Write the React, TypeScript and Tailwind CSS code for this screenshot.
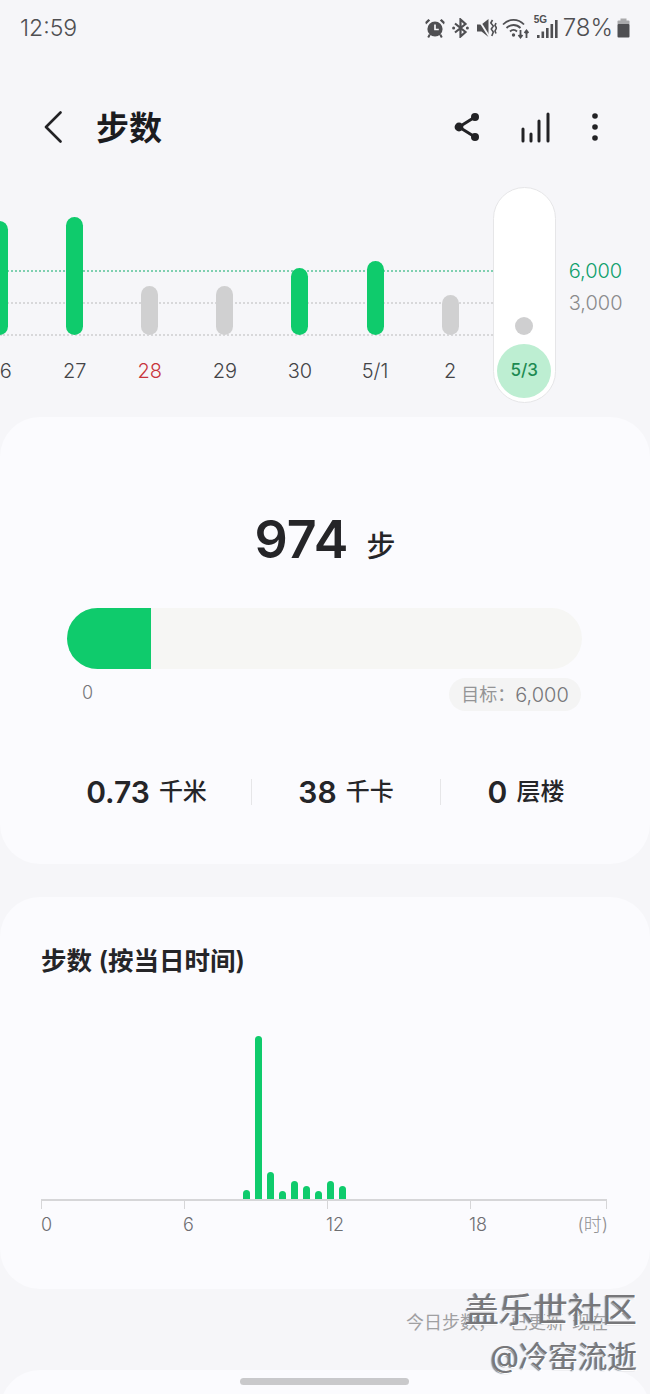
import React from 'react';

const days = [
  { label: '26', height: 114, green: true },
  { label: '27', height: 118, green: true },
  { label: '28', height: 49, green: false, red: true },
  { label: '29', height: 49, green: false },
  { label: '30', height: 67, green: true },
  { label: '5/1', height: 74, green: true },
  { label: '2', height: 40, green: false },
];

const hourly = [9, 163, 27, 8, 18, 13, 8, 18, 13];

const StatusIcons = () => (
  <div className="flex items-center text-[#4f4f52]">
    {/* alarm */}
    <svg width="20" height="20" viewBox="0 0 20 20" fill="currentColor">
      <circle cx="10" cy="11" r="7.6" />
      <path d="M1 6.5 5.2 2.4 3.4 1 0.3 4ZM19 6.5 14.8 2.4 16.6 1 19.7 4Z" />
      <path d="M10 6.5V11.5H13.8" stroke="#f6f6f9" strokeWidth="1.7" fill="none" />
      <path d="M4.8 16.5 3.2 19.4M15.2 16.5 16.8 19.4" stroke="currentColor" strokeWidth="2" />
    </svg>
    {/* bluetooth */}
    <svg width="17" height="20" viewBox="0 0 17 20" fill="none" stroke="currentColor" strokeWidth="2.2" className="ml-[7px]">
      <path d="M3 5.5 13.5 14 8.5 18.5V1.5L13.5 6 3 14.5" />
      <circle cx="1.6" cy="10" r="1.5" fill="currentColor" stroke="none" />
      <circle cx="15.4" cy="10" r="1.5" fill="currentColor" stroke="none" />
    </svg>
    {/* muted speaker */}
    <svg width="20" height="20" viewBox="0 0 20 20" fill="currentColor" className="ml-[8px]">
      <path d="M0 6.5H4.5L11.5 1V19L4.5 13.5H0Z" />
      <path d="M1.5 1.5 12.5 19" stroke="#f6f6f9" strokeWidth="1.8" />
      <path d="M15.5 2 13.8 5 16.3 8 14.3 11 16.3 14 14.8 18M19 5 18 7.5 19.5 10 18 13 19 15.5" stroke="currentColor" strokeWidth="1.6" fill="none" />
    </svg>
    {/* wifi with arrows */}
    <svg width="27" height="22" viewBox="0 0 27 22" fill="none" stroke="currentColor" strokeWidth="1.8" className="ml-[5px]">
      <path d="M1 7.5C7 1.2 16 1.2 22 7.5" />
      <path d="M4.5 11C8.5 7 14.5 7 18.5 11" />
      <path d="M8 14.5C10 12.5 13 12.5 15 14.5" />
      <circle cx="11.5" cy="18" r="1.7" fill="currentColor" stroke="none" />
      <path d="M18.5 13V20.5M16.5 18 18.5 20.5 20.5 18M24.5 21V14M22.5 16 24.5 13.5 26.5 16" />
    </svg>
    {/* 5G signal */}
    <div className="relative ml-[5px] h-[22px] w-[24px]">
      <span className="absolute left-0 top-[-3px] text-[10px] font-bold leading-[12px] [font-family:'Liberation_Sans',sans-serif]">5G</span>
      <svg width="24" height="22" viewBox="0 0 24 22" fill="currentColor" className="absolute inset-0">
        <rect x="3" y="18" width="2.6" height="3" />
        <rect x="7.5" y="14.5" width="2.6" height="6.5" />
        <rect x="12" y="11" width="2.6" height="10" />
        <rect x="16.5" y="7" width="2.6" height="14" />
        <rect x="21" y="3" width="2.6" height="18" />
      </svg>
    </div>
    <span className="ml-[5px] text-[24px] font-light leading-none">78%</span>
    {/* battery */}
    <svg width="13" height="20" viewBox="0 0 13 20" className="ml-[4px]">
      <rect x="3.5" y="0.5" width="6" height="3" fill="#a9a9ab" />
      <rect x="0.5" y="2.5" width="12" height="4" rx="1" fill="#a9a9ab" />
      <rect x="0.5" y="6" width="12" height="13.5" rx="1" fill="currentColor" />
    </svg>
  </div>
);

const Metric = ({ value, unit, width, divider }: { value: string; unit: string; width: string; divider?: boolean }) => (
  <div className={`flex h-[26px] items-center justify-center ${width} ${divider ? 'border-r border-[#e6e6e8]' : ''}`}>
    <span className="text-[30px] font-semibold leading-none text-[#252528]">{value}</span>
    <span className="ml-[9px] text-[24px] font-medium leading-none text-[#252528]">{unit}</span>
  </div>
);

export default function App() {
  return (
    <div className="relative h-[1394px] w-[650px] overflow-hidden bg-[#f6f6f9] [font-family:Inter,'Noto_Sans_CJK_SC',sans-serif]">
      {/* status bar */}
      <div className="flex h-[56px] items-center justify-between pl-[20px] pr-[20px]">
        <span className="text-[23px] font-light leading-none text-[#4f4f52]">12:59</span>
        <StatusIcons />
      </div>

      {/* header */}
      <div className="mt-[36px] flex h-[70px] items-center pl-[44px] text-[#222225]">
        <svg width="18" height="32" viewBox="0 0 18 32" fill="none" stroke="currentColor" strokeWidth="2.6" strokeLinecap="round" strokeLinejoin="round">
          <path d="M16.5 1.5 2 16 16.5 30.5" />
        </svg>
        <span className="ml-[34px] mt-[2px] text-[33px] font-bold leading-none text-[#1c1c1f]">步数</span>
        <svg width="26" height="30" viewBox="0 0 26 30" fill="none" stroke="currentColor" strokeWidth="3" className="ml-[292px]">
          <path d="M21 5 5 15 21 25" />
          <circle cx="21" cy="5" r="4" fill="currentColor" stroke="none" />
          <circle cx="5" cy="15" r="4.4" fill="currentColor" stroke="none" />
          <circle cx="21" cy="25" r="4" fill="currentColor" stroke="none" />
        </svg>
        <svg width="30" height="32" viewBox="0 0 30 32" fill="none" stroke="currentColor" strokeWidth="3" strokeLinecap="round" className="ml-[40px]">
          <path d="M3 30V18M11 30V23M19 30V10M28 30V3" />
        </svg>
        <svg width="8" height="28" viewBox="0 0 8 28" fill="currentColor" className="ml-[41px]">
          <circle cx="4" cy="3" r="2.8" />
          <circle cx="4" cy="14" r="2.8" />
          <circle cx="4" cy="25" r="2.8" />
        </svg>
      </div>

      {/* weekly chart */}
      <div className="relative mt-[25px] h-[216px]">
        <div className="absolute left-0 top-[83px] w-[493px] border-t-2 border-dotted border-[#7fd0b0]" />
        <div className="absolute left-0 top-[115px] w-[493px] border-t-2 border-dotted border-[#d8d8da]" />
        <div className="absolute left-0 top-[147px] w-[493px] border-t-2 border-dotted border-[#d8d8da]" />
        <div className="relative ml-[-38px] flex">
          {days.map((d) => (
            <div key={d.label} className="flex w-[75.1px] flex-col items-center">
              <div className="flex h-[148px] items-end">
                <div
                  className={`w-[17px] rounded-full ${d.green ? 'bg-[#0fcb6c]' : 'bg-[#d0d0d1]'}`}
                  style={{ height: d.height }}
                />
              </div>
              <div className={`mt-[9px] flex h-[54px] items-center text-[20px] font-light ${d.red ? 'text-[#c8353c]' : 'text-[#444447]'}`}>
                {d.label}
              </div>
            </div>
          ))}
          {/* selected day */}
          <div className="ml-[5px] flex h-[216px] w-[63px] flex-col items-center rounded-full border border-[#e6e6e8] bg-white">
            <div className="flex h-[147px] items-end">
              <div className="h-[18px] w-[18px] rounded-full bg-[#cfcfd0]" />
            </div>
            <div className="mt-[9px] flex h-[54px] w-[54px] items-center justify-center rounded-full bg-[#bdeed2] text-[17px] font-medium text-[#1d8a52]">
              5/3
            </div>
          </div>
          <div className="ml-[13px] flex h-[132px] flex-col pt-[68px] text-[20px] font-light leading-[32px]">
            <span className="text-[#0f9f6c]">6,000</span>
            <span className="text-[#8a8a8c]">3,000</span>
          </div>
        </div>
      </div>

      {/* today summary */}
      <div className="mt-[14px] h-[447px] rounded-[40px] bg-[#fbfbfe] px-[67px] pt-[93px]">
        <div className="flex h-[60px] items-center justify-center">
          <span className="text-[52px] font-semibold leading-none text-[#252528]">974</span>
          <span className="ml-[18px] mt-[12px] text-[29px] font-medium leading-none text-[#252528]">步</span>
        </div>
        <div className="mt-[38px] h-[61px] w-[515px] overflow-hidden rounded-full bg-[#f6f6f4]">
          <div className="h-full w-[84px] bg-[#0fcb6c]" />
        </div>
        <div className="mt-[9px] flex w-[514px] items-start justify-between pl-[15px]">
          <span className="text-[18px] font-light leading-[30px] text-[#77777a]">0</span>
          <span className="flex h-[33px] w-[132px] items-center justify-center rounded-full bg-[#f4f4f4] text-[18px] leading-none text-[#949496]">
            目标：<span className="text-[20px] font-light text-[#77777a]">6,000</span>
          </span>
        </div>
        <div className="ml-[-25px] mt-[68px] flex w-[569px]">
          <Metric value="0.73" unit="千米" width="w-[210px]" divider />
          <Metric value="38" unit="千卡" width="w-[189px]" divider />
          <Metric value="0" unit="层楼" width="w-[170px]" />
        </div>
      </div>

      {/* hourly chart */}
      <div className="mt-[33px] h-[392px] rounded-[40px] bg-[#fbfbfe] pl-[41px] pt-[49px]">
        <div className="text-[25.5px] font-semibold leading-[30px] text-[#252528]">步数 (按当日时间)</div>
        <div className="mt-[60px] flex h-[163px] items-end gap-[5px] pl-[202px]">
          {hourly.map((h, i) => (
            <div key={i} className="w-[7px] rounded-t-full bg-[#0fcb6c]" style={{ height: h }} />
          ))}
        </div>
        <div className="flex h-[9px] w-[566px] border-t-2 border-[#d6d6d8]">
          <div className="h-[8px] w-[143px] border-l border-[#d6d6d8]" />
          <div className="h-[8px] w-[143px] border-l border-[#d6d6d8]" />
          <div className="h-[8px] w-[143px] border-l border-[#d6d6d8]" />
          <div className="h-[8px] w-[137px] border-x border-[#d6d6d8]" />
        </div>
        <div className="mt-[5px] flex w-[567px] text-[18px] font-light leading-[24px] text-[#6e6e71]">
          <span className="w-[142px]">0</span>
          <span className="w-[143px]">6</span>
          <span className="w-[143px]">12</span>
          <span className="w-[100px]">18</span>
          <span className="w-[39px] whitespace-nowrap text-right text-[#8f8f91]">(时)</span>
        </div>
      </div>

      {/* last updated */}
      <div className="flex h-[81px] justify-end pr-[42px] pt-[22px]">
        <span className="text-[18px] leading-[24px] text-[#a0a0a2]">
          今日步数，<span className="ml-[14px]">已更新</span>
          <span className="ml-[8px]">现在</span>
        </span>
      </div>

      {/* next card, cut off by the screen */}
      <div className="h-[60px] rounded-t-[40px] bg-[#fbfbfe]" />

      {/* home indicator */}
      <div className="absolute bottom-[9px] left-[240px] h-[7px] w-[169px] rounded-full bg-[#c9c9cb]" />

      {/* forum watermark */}
      <div className="absolute right-[13px] top-[1290px] flex flex-col items-end text-[#77777a] [text-shadow:1px_1px_0_#ffffff,-1px_1px_1px_#8a8a8c]">
        <span className="text-[34.5px] leading-[40px]">盖乐世社区</span>
        <span className="mt-[9px] text-[29.5px] leading-[34px]">@冷窑流逝</span>
      </div>
    </div>
  );
}
